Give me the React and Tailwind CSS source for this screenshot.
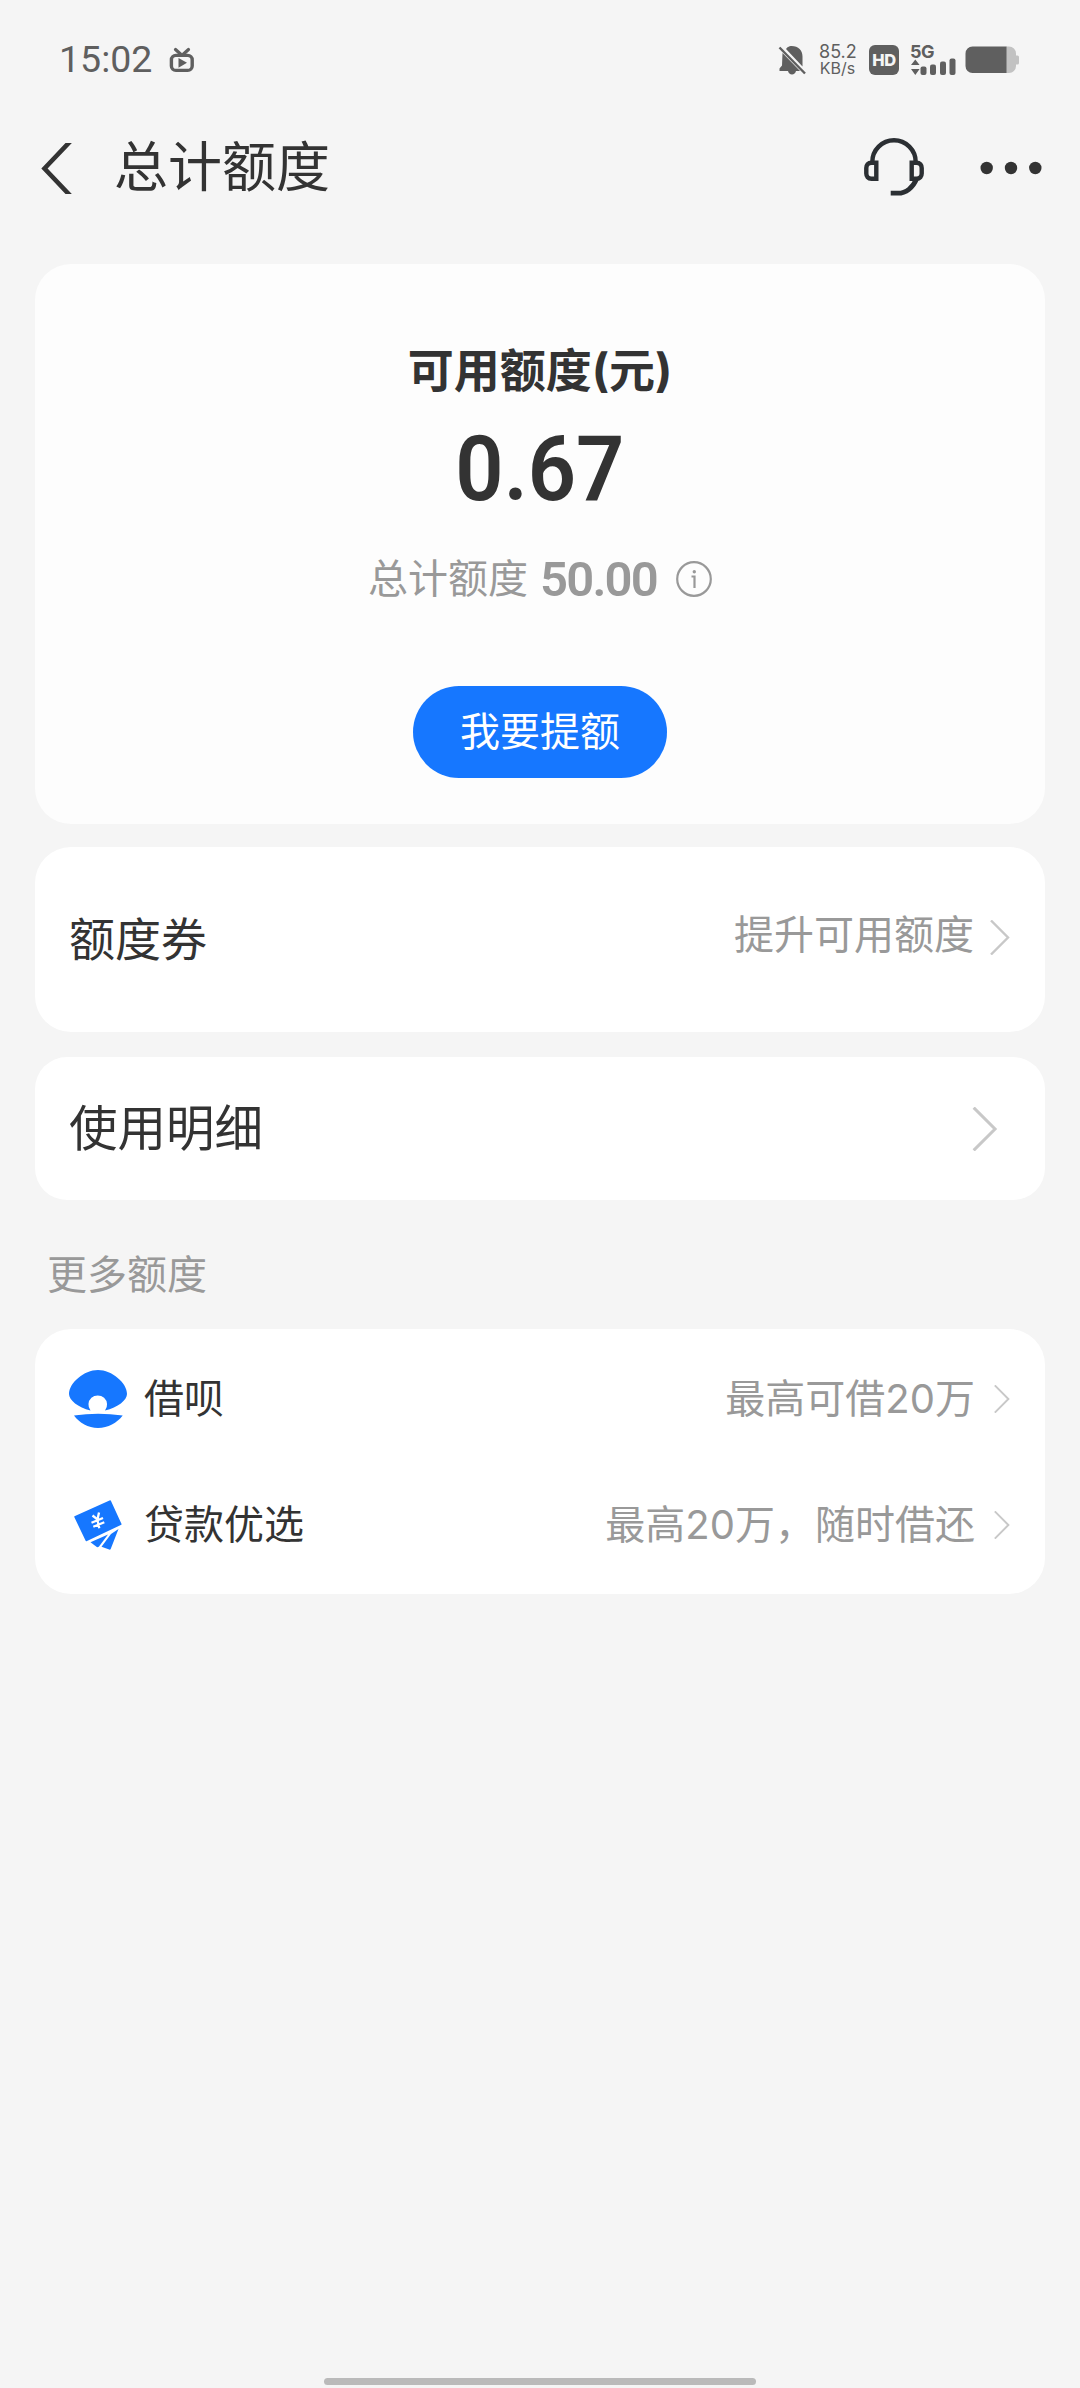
const cn = 'font-[Inter,"Noto_Sans_CJK_SC",sans-serif]'

function TvIcon() {
  return (
    <svg className="w-[26px] h-[26px] text-[#5f5f5f]" viewBox="0 0 26 26" fill="none" stroke="currentColor">
      <rect x="2.4" y="8.4" width="20.8" height="15" rx="4.5" strokeWidth="3.4" />
      <path d="M6.5 2.5l5 4.5M19.5 2.5l-5 4.5" strokeWidth="3.2" strokeLinecap="round" />
      <path d="M9.5 11l8.5 4.8-8.5 5z" fill="currentColor" stroke="none" />
    </svg>
  )
}

function BellOffIcon() {
  return (
    <svg className="w-[29px] h-[32px] text-[#5f5f5f]" viewBox="0 0 29 32" fill="currentColor">
      <path d="M9.5 3.3C11 2.3 12.5 2 13.5 2c7 0 11 4.5 11 10.5V22.5L8 5zM4.5 9L22 27H18c-.5 2-2 3.5-4 3.5S10.5 29 10 27H1.5v-2.5l2.5-3z" />
      <path d="M1.5 3.5l25.5 26" stroke="currentColor" strokeWidth="2.4" />
    </svg>
  )
}

function SignalIcon() {
  return (
    <svg className="w-[46px] h-[18px] text-[#5f5f5f]" viewBox="0 0 46 18" fill="currentColor">
      <path d="M1 7l4.3-5.5L9.6 7zM1 11h8.6l-4.3 6z" />
      <rect x="10.5" y="8.5" width="6" height="8.5" rx="2" />
      <rect x="20" y="6.5" width="6" height="10.5" rx="2" />
      <rect x="30" y="3.5" width="6" height="13.5" rx="2" />
      <rect x="39.5" y="0.5" width="6" height="16.5" rx="2" />
    </svg>
  )
}

function BatteryIcon() {
  return (
    <svg className="w-[54px] h-[28px]" viewBox="0 0 54 28">
      <path d="M41 .5h3a7 7 0 0 1 7 7V9.5h1.5a1.5 1.5 0 0 1 1.5 1.5v6a1.5 1.5 0 0 1-1.5 1.5H51v1.5a7 7 0 0 1-7 7h-3z" fill="#c2c2c2" />
      <path d="M7.5 .5H41.5v26.5H7.5a7 7 0 0 1-7-7V7.5a7 7 0 0 1 7-7z" fill="#5f5f5f" />
    </svg>
  )
}

function StatusBar() {
  return (
    <div className="flex items-start justify-between h-[120px] pl-[59px] pr-[61px] pt-[40px] text-[#5f5f5f]">
      <div className="flex items-center h-10">
        <span className="w-[110px] font-[Roboto,sans-serif] text-[37.5px] leading-[38px] pb-[2px]">15:02</span>
        <TvIcon />
      </div>
      <div className="flex items-center h-10">
        <BellOffIcon />
        <div className="w-[37px] ml-[12px] text-center font-[Inter,sans-serif] whitespace-nowrap">
          <div className="text-[18px] leading-[17px]">85.2</div>
          <div className="text-[16px] leading-[17px]">KB/s</div>
        </div>
        <div className="ml-[13px] w-[30px] h-[30px] rounded-[6px] bg-[#5f5f5f] text-[#f5f5f5] flex items-center justify-center font-[Inter,sans-serif] font-extrabold text-[16.5px] tracking-[-0.5px]">
          HD
        </div>
        <div className="ml-[11px] w-[46px] h-8 font-[Inter,sans-serif]">
          <div className="h-[14px] text-[18px] leading-[15px] font-bold tracking-[-0.5px]">5G</div>
          <SignalIcon />
        </div>
        <div className="ml-[9px]">
          <BatteryIcon />
        </div>
      </div>
    </div>
  )
}

function HeadsetIcon() {
  return (
    <svg className="w-16 h-16" viewBox="0 0 64 64" fill="none" stroke="#2b2f33" strokeWidth="4.4">
      <path d="M10.3 26A21.7 21.7 0 0 1 53.7 26" />
      <path d="M14.3 26.7H9.5C6 26.7 4.3 29 4.3 32v5.5c0 3 1.7 5.2 5.2 5.2h4.8z" />
      <path d="M49.7 26.7h4.8c3.5 0 5.2 2.3 5.2 5.3v5.5c0 3-1.7 5.2-5.2 5.2h-4.8z" />
      <path d="M54.5 43C51 51.5 44 57.2 36 57.2h-7.3" strokeWidth="4.8" />
    </svg>
  )
}

function Header() {
  return (
    <div className="flex items-center h-[96px] pl-[41px] pr-[38px] text-[#333]">
      <svg className="w-[31px] h-[51px]" viewBox="0 0 31 51" fill="none" stroke="currentColor" strokeWidth="4.6">
        <path d="M31-3.5L3.5 25.5 31 54.5" />
      </svg>
      <h1 className="ml-[42px] text-[54px] leading-[80px]">总计额度</h1>
      <div className="ml-auto flex items-center">
        <HeadsetIcon />
        <svg className="ml-[54px] w-[62px] h-[14px]" viewBox="0 0 62 14" fill="currentColor">
          <circle cx="6.7" cy="7" r="6.2" />
          <circle cx="31" cy="7" r="6.2" />
          <circle cx="55.3" cy="7" r="6.2" />
        </svg>
      </div>
    </div>
  )
}

function Chevron({ className }) {
  return (
    <svg className={className} viewBox="0 0 20 35" fill="none" stroke="#c8c8c8" strokeWidth="2.4">
      <path d="M1 .5l17 17-17 17" />
    </svg>
  )
}

function ShellIcon() {
  return (
    <svg className="w-[58px] h-[58px]" viewBox="0 0 58 58" fill="#1677ff">
      <path d="M29 0C43 0 58 13 58 24c0 6-9 13.500-22 16.500A9.300 9.300 0 1 0 21.500 40.500C9 37.500 0 30 0 24 0 13 15 0 29 0z" />
      <path d="M5 45.5Q29 42 53.7 45.5C48 53 39 58 29 58S10.5 53 5 45.5z" />
    </svg>
  )
}

function CardsIcon() {
  return (
    <svg className="w-[48px] h-[50px]" viewBox="0 0 48 50" fill="#1677ff">
      <path d="M1 16L35.5 .5a1 1 0 0 1 1.5.5l10.3 22.5a1 1 0 0 1-.5 1.5L13 41a1 1 0 0 1-1.5-.5L.5 17.5A1 1 0 0 1 1 16z" />
      <path d="M16.5 42.3L34 34.5 25 46.5q-1 1-2.2.6z" />
      <path d="M27.5 46.8L37 34l7.5-5-7.8 20q-.5 1-1.5.6z" />
      <path d="M18.5 15.5l5 4 1.5-7M23.3 19.5l2 8.8M17.5 22.8l11.5-4.800M19.3 26.8l11-4.6" fill="none" stroke="#fff" strokeWidth="2.3" />
    </svg>
  )
}

const MORE = [
  { name: '借呗', desc: '最高可借20万', icon: ShellIcon },
  { name: '贷款优选', desc: '最高20万，随时借还', icon: CardsIcon },
]

export default function App() {
  return (
    <div className={`w-[1080px] h-[2388px] flex flex-col bg-[#f5f5f5] text-[#333] ${cn}`}>
      <StatusBar />
      <Header />

      <main className="px-[35px] pt-[48px]">
        {/* 可用额度 */}
        <section className="h-[560px] rounded-[36px] bg-[#fdfdfd] flex flex-col items-center pt-[76px]">
          <div className="text-[46px] leading-[60px] font-bold">可用额度(元)</div>
          <div className="mt-[23px] h-[92px] text-[91px] leading-[92px] font-semibold font-[Roboto,sans-serif] scale-x-[0.93]">
            0.67
          </div>
          <div className="mt-[34px] h-[60px] flex items-center text-[#999]">
            <span className="text-[40px] leading-[60px]">总计额度</span>
            <span className="ml-[12px] pt-[2px] text-[49px] leading-[58px] font-semibold font-[Roboto,sans-serif] tracking-[-1.8px]">50.00</span>
            <svg className="ml-[19px] w-[36px] h-[36px]" viewBox="0 0 36 36" fill="none" stroke="currentColor" strokeWidth="2.2">
              <circle cx="18" cy="18" r="16.8" />
              <path d="M15.5 15.5h3V27" />
              <circle cx="18.3" cy="10.8" r="1.7" fill="currentColor" stroke="none" />
            </svg>
          </div>
          <button className="mt-[77px] w-[254px] h-[92px] rounded-full bg-[#1677ff] text-white text-[40px] leading-[92px]">
            我要提额
          </button>
        </section>

        <section className="mt-[23px] h-[185px] rounded-[36px] bg-white flex items-center pl-[34px] pr-[35px]">
          <span className="text-[46px]">额度券</span>
          <span className="ml-auto pb-[9px] text-[40px] text-[#999]">提升可用额度</span>
          <Chevron className="ml-[16px] mb-[4px] w-[20px] h-[35px]" />
        </section>

        <section className="mt-[25px] h-[143px] rounded-[32px] bg-white flex items-center pl-[34px] pr-[47px]">
          <span className="pt-[2px] text-[48.5px]">使用明细</span>
          <Chevron className="ml-auto w-[26px] h-[44px]" />
        </section>

        <h2 className="mt-[45px] pl-[12px] h-[60px] text-[40px] leading-[60px] text-[#999]">更多额度</h2>

        <section className="mt-[24px] h-[265px] rounded-[36px] bg-white pt-[7px]">
          {MORE.map(({ name, desc, icon: Icon }) => (
            <div key={name} className="flex items-center h-[126px] pl-[34px] pr-[35px]">
              <div className="w-[58px] flex justify-center">
                <Icon />
              </div>
              <span className="ml-[17px] text-[40px]">{name}</span>
              <span className="ml-auto text-[40px] text-[#999]">{desc}</span>
              <Chevron className="ml-[19px] w-[16px] h-[28px]" />
            </div>
          ))}
        </section>
      </main>

      <div className="mt-auto mb-[3px] mx-auto w-[432px] h-[7px] rounded-full bg-[#bababa]" />
    </div>
  )
}
